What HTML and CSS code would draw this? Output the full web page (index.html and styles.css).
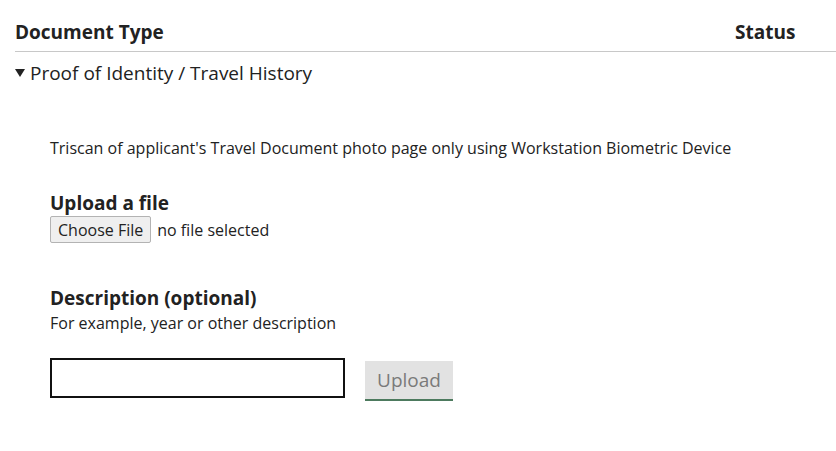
FILE: index.html
```html
<!DOCTYPE html>
<html lang="en">
<head>
    <meta charset="UTF-8">
    <title>Documents</title>
    <link rel="stylesheet" href="styles.css">
</head>
<body>

<div class="doc-table">
    <div class="doc-head">
        <span class="col-type">Document Type</span>
        <span class="col-status">Status</span>
    </div>

    <details class="doc-group" open>
        <summary>Proof of Identity / Travel History</summary>

        <div class="doc-body">
            <p class="doc-desc">Triscan of applicant's Travel Document photo page only using Workstation Biometric Device</p>

            <div class="field">
                <label class="field-label">Upload a file</label>
                <div class="file-row">
                    <button class="choose-btn" type="button">Choose File</button>
                    <span class="file-name">no file selected</span>
                </div>
            </div>

            <div class="field desc-field">
                <label class="field-label">Description (optional)</label>
                <div class="hint">For example, year or other description</div>
                <div class="upload-row">
                    <input type="text" class="desc-input">
                    <button class="upload-btn" type="button" disabled>Upload</button>
                </div>
            </div>
        </div>
    </details>
</div>

</body>
</html>
```

FILE: styles.css
```css
body {
    margin: 0;
    font-family: "Open Sans", Arial, sans-serif;
    color: #222;
    background: #fff;
}
.doc-table {
    padding: 20px 0 0 15px;
}
.doc-head {
    display: flex;
    justify-content: space-between;
    font-weight: bold;
    font-size: 19px;
    line-height: 24px;
    padding-bottom: 7px;
    border-bottom: 1px solid #c8c8c8;
}
.col-status {
    width: 101px;
}
.doc-group summary {
    list-style: none;
    font-size: 19px;
    line-height: 26px;
    padding-top: 8px;
    cursor: pointer;
}
.doc-group summary::-webkit-details-marker {
    display: none;
}
.doc-group summary::before {
    content: "";
    display: inline-block;
    border-left: 5px solid transparent;
    border-right: 5px solid transparent;
    border-top: 8px solid #222;
    margin-right: 5px;
    vertical-align: 3px;
}
.doc-body {
    padding: 50px 0 0 35px;
}
.doc-desc {
    margin: 0;
    font-size: 16px;
    line-height: 24px;
}
.field {
    margin-top: 30px;
}
.field-label {
    display: block;
    font-weight: bold;
    font-size: 19px;
    line-height: 26px;
}
.file-row {
    display: flex;
    align-items: center;
    gap: 6px;
}
.choose-btn {
    font-family: "Open Sans", Arial, sans-serif;
    font-size: 16px;
    color: #222;
    background: #efefef;
    border: 1px solid #b3b3b3;
    border-radius: 2px;
    padding: 1px 7px;
    height: 27px;
}
.file-name {
    font-size: 16px;
}
.desc-field {
    margin-top: 42px;
}
.hint {
    font-size: 16px;
    line-height: 24px;
}
.upload-row {
    display: flex;
    align-items: flex-start;
    gap: 20px;
    margin-top: 23px;
}
.desc-input {
    width: 295px;
    height: 40px;
    box-sizing: border-box;
    border: 2px solid #111;
    margin: 0;
}
.upload-btn {
    margin-top: 3px;
    width: 88px;
    height: 40px;
    font-family: "Open Sans", Arial, sans-serif;
    font-size: 19px;
    color: #7a7a7a;
    background: #e2e2e2;
    border: none;
    border-bottom: 2px solid #4d7a5e;
    padding: 0;
}
```
